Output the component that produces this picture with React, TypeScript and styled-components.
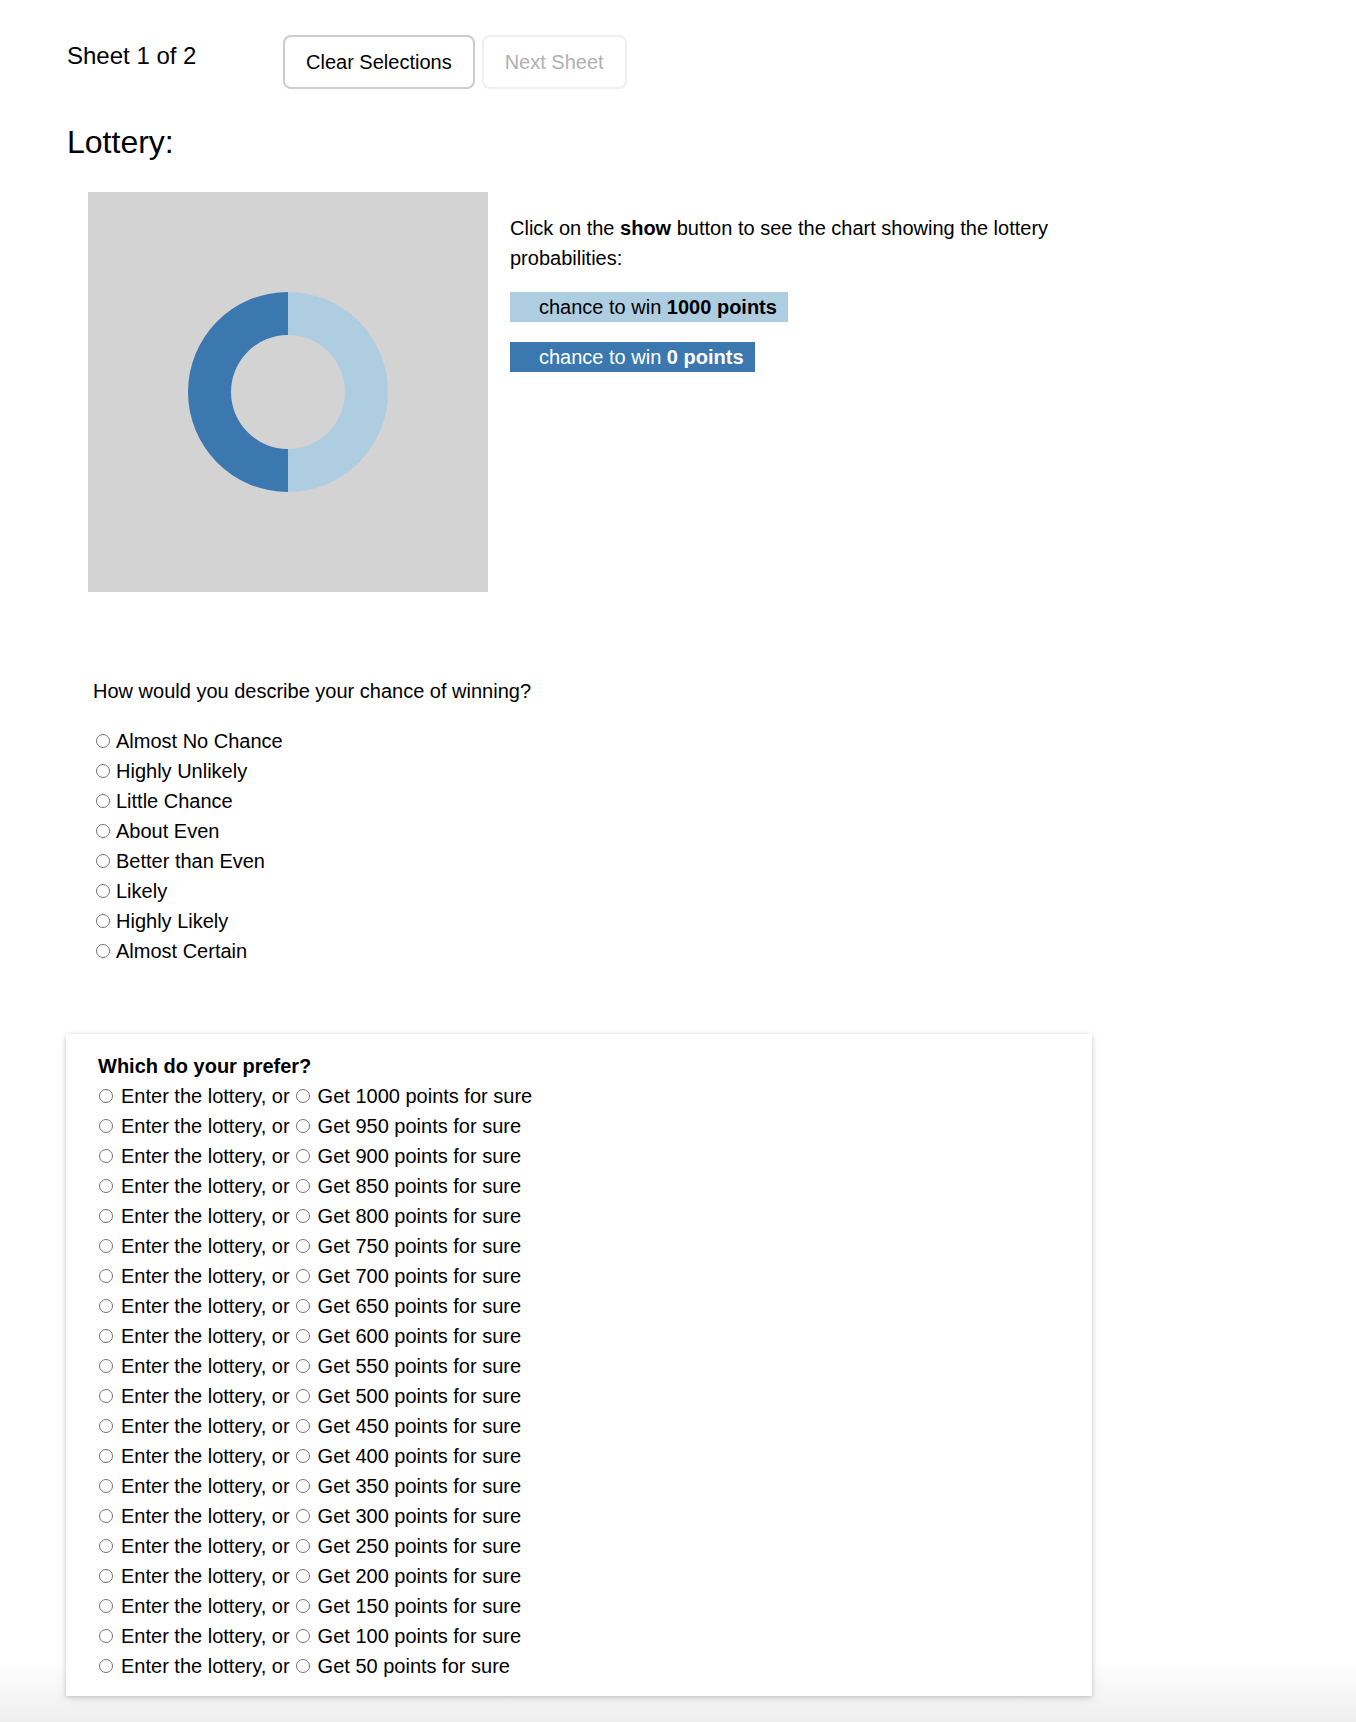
import React from "react";
import styled, { createGlobalStyle } from "styled-components";

const GlobalStyle = createGlobalStyle`
  html, body {
    margin: 0;
    padding: 0;
  }
  body {
    min-height: 1722px;
    background: linear-gradient(to bottom, #ffffff 0px, #ffffff 1660px, #eeeeee 1722px);
    font-family: "Liberation Sans", Arial, Helvetica, sans-serif;
    color: #000;
  }
`;

const Page = styled.div`
  padding: 35px 0 0 67px;
  font-size: 20px;
`;

const Header = styled.div`
  display: flex;
  align-items: flex-start;
`;

const SheetLabel = styled.div`
  width: 216px;
  padding-top: 6px;
  font-size: 24px;
  line-height: 30px;
`;

const ButtonGroup = styled.div`
  display: flex;
  gap: 7px;
`;

const Button = styled.button<{ $disabled?: boolean }>`
  height: 54px;
  padding: 0 21px;
  background: #fff;
  border: 2px solid ${(p) => (p.$disabled ? "#efefef" : "#cccccc")};
  border-radius: 8px;
  font-family: "Liberation Sans", Arial, sans-serif;
  font-size: 20px;
  color: ${(p) => (p.$disabled ? "#b0b0b0" : "#000")};
  cursor: ${(p) => (p.$disabled ? "default" : "pointer")};
`;

const Title = styled.h1`
  margin: 35px 0 0;
  font-size: 32px;
  line-height: 36px;
  font-weight: normal;
`;

const ChartRow = styled.div`
  display: flex;
  gap: 22px;
  margin-top: 32px;
  padding-left: 21px;
`;

const ChartBox = styled.div`
  width: 400px;
  height: 400px;
  background: #d3d3d3;
  flex: none;
`;

const InfoCol = styled.div`
  width: 560px;
  padding-top: 21px;
  line-height: 30px;
`;

const InfoText = styled.p`
  margin: 0;
`;

const LegendList = styled.div`
  display: flex;
  flex-direction: column;
  align-items: flex-start;
  gap: 20px;
  margin-top: 19px;
`;

const LegendItem = styled.div<{ $bg: string; $fg: string }>`
  height: 30px;
  line-height: 30px;
  padding: 0 11px 0 29px;
  background: ${(p) => p.$bg};
  color: ${(p) => p.$fg};
`;

const Survey = styled.div`
  margin-top: 84px;
  padding-left: 26px;
`;

const Question = styled.div`
  line-height: 30px;
`;

const OptionList = styled.div`
  margin-top: 20px;
  display: flex;
  flex-direction: column;
`;

const OptionRow = styled.label`
  display: flex;
  align-items: center;
  height: 30px;
`;

const Radio = styled.input.attrs({ type: "radio" })<{ $ml?: number; $mr?: number }>`
  appearance: none;
  -webkit-appearance: none;
  width: 14px;
  height: 14px;
  margin: 0 ${(p) => (p.$mr ?? 6)}px 0 ${(p) => (p.$ml ?? 3)}px;
  border: 1px solid #737373;
  border-radius: 50%;
  background: #fff;
  box-sizing: border-box;
  flex: none;
`;

const Card = styled.div`
  margin: 68px 0 0 -1px;
  width: 1026px;
  box-sizing: border-box;
  padding: 17px 32px 15px;
  background: #fff;
  box-shadow: 0 1px 4px rgba(0, 0, 0, 0.18), 0 3px 10px rgba(0, 0, 0, 0.08);
`;

const CardTitle = styled.div`
  font-weight: bold;
  line-height: 30px;
`;

const ChoiceRow = styled.div`
  display: flex;
  align-items: center;
  height: 30px;
`;

const Donut = () => (
  <svg width="400" height="400" viewBox="0 0 400 400">
    <path
      d="M200 100 A100 100 0 0 1 200 300 L200 257 A57 57 0 0 0 200 143 Z"
      fill="#afcde1"
    />
    <path
      d="M200 300 A100 100 0 0 1 200 100 L200 143 A57 57 0 0 0 200 257 Z"
      fill="#3c78b0"
    />
  </svg>
);

const options = [
  "Almost No Chance",
  "Highly Unlikely",
  "Little Chance",
  "About Even",
  "Better than Even",
  "Likely",
  "Highly Likely",
  "Almost Certain",
];

const amounts = Array.from({ length: 20 }, (_, i) => 1000 - i * 50);

export default function App() {
  return (
    <>
      <GlobalStyle />
      <Page>
        <Header>
          <SheetLabel>Sheet 1 of 2</SheetLabel>
          <ButtonGroup>
            <Button>Clear Selections</Button>
            <Button $disabled disabled>
              Next Sheet
            </Button>
          </ButtonGroup>
        </Header>

        <Title>Lottery:</Title>

        <ChartRow>
          <ChartBox>
            <Donut />
          </ChartBox>
          <InfoCol>
            <InfoText>
              Click on the <b>show</b> button to see the chart showing the lottery probabilities:
            </InfoText>
            <LegendList>
              <LegendItem $bg="#afcde1" $fg="#000">
                chance to win <b>1000 points</b>
              </LegendItem>
              <LegendItem $bg="#3c78b0" $fg="#fff">
                chance to win <b>0 points</b>
              </LegendItem>
            </LegendList>
          </InfoCol>
        </ChartRow>

        <Survey>
          <Question>How would you describe your chance of winning?</Question>
          <OptionList>
            {options.map((o) => (
              <OptionRow key={o}>
                <Radio name="chance" />
                <span>{o}</span>
              </OptionRow>
            ))}
          </OptionList>
        </Survey>

        <Card>
          <CardTitle>Which do your prefer?</CardTitle>
          {amounts.map((a) => (
            <ChoiceRow key={a}>
              <Radio name={`c${a}`} $ml={1} $mr={8} />
              <span>Enter the lottery, or</span>
              <Radio name={`c${a}`} $ml={6} $mr={8} />
              <span>Get {a} points for sure</span>
            </ChoiceRow>
          ))}
        </Card>
      </Page>
    </>
  );
}
